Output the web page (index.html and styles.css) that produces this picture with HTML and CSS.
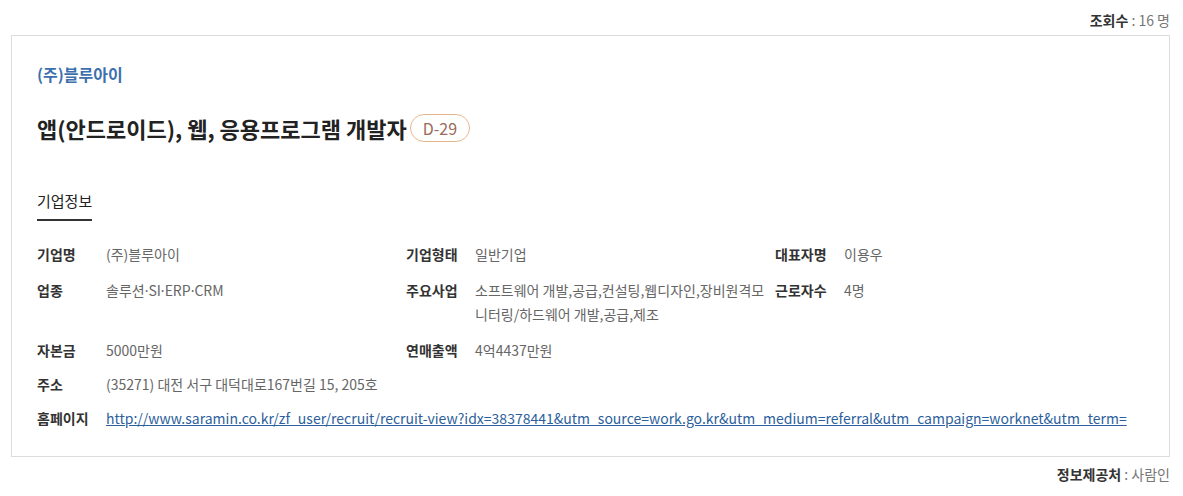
FILE: index.html
```html
<!DOCTYPE html>
<html>
<head>
  <title>채용정보 - 기업정보</title>
  <meta charset="UTF-8">
  <link rel="stylesheet" href="styles.css">
</head>
<body>
  <div class="wrap">
    <p class="meta"><strong>조회수</strong> : 16 명</p>

    <div class="card">
      <p class="company">(주)블루아이</p>
      <h2 class="title">앱(안드로이드), 웹, 응용프로그램 개발자 <span class="dday">D-29</span></h2>

      <div class="tab">
        <span class="tab-on">기업정보</span>
      </div>

      <div class="info">
        <dl class="item"><dt>기업명</dt><dd>(주)블루아이</dd></dl>
        <dl class="item"><dt>기업형태</dt><dd>일반기업</dd></dl>
        <dl class="item"><dt>대표자명</dt><dd>이용우</dd></dl>

        <dl class="item"><dt>업종</dt><dd>솔루션<span class="dot">·</span>SI<span class="dot">·</span>ERP<span class="dot">·</span>CRM</dd></dl>
        <dl class="item"><dt>주요사업</dt><dd>소프트웨어 개발,공급,컨설팅,웹디자인,장비원격모니터링/하드웨어 개발,공급,제조</dd></dl>
        <dl class="item"><dt>근로자수</dt><dd>4명</dd></dl>

        <dl class="item"><dt>자본금</dt><dd>5000만원</dd></dl>
        <dl class="item wide2"><dt>연매출액</dt><dd>4억4437만원</dd></dl>
      </div>

      <div class="info-full">
        <dl class="item"><dt>주소</dt><dd>(35271) 대전 서구 대덕대로167번길 15, 205호</dd></dl>
        <dl class="item"><dt>홈페이지</dt><dd><a href="http://www.saramin.co.kr/zf_user/recruit/recruit-view?idx=38378441&amp;utm_source=work.go.kr&amp;utm_medium=referral&amp;utm_campaign=worknet&amp;utm_term=">http://www.saramin.co.kr/zf_user/recruit/recruit-view?idx=38378441&amp;utm_source=work.go.kr&amp;utm_medium=referral&amp;utm_campaign=worknet&amp;utm_term=</a></dd></dl>
      </div>
    </div>

    <p class="meta source"><strong>정보제공처</strong> : 사람인</p>
  </div>
</body>
</html>
```

FILE: styles.css
```css
body {
  margin: 0;
  font-family: "Noto Sans CJK KR", "Noto Sans", sans-serif;
  color: #333;
  background: #fff;
}
.wrap {
  margin: 0 13px 0 11px;
  padding-top: 10px;
}
.meta {
  margin: 0;
  text-align: right;
  font-size: 14px;
  line-height: 20px;
  color: #777;
}
.meta strong {
  color: #333;
  font-weight: bold;
}
.card {
  margin-top: 5px;
  border: 1px solid #dcdcdc;
  padding: 27px 25px 26px 25px;
}
.company {
  margin: 0;
  font-size: 16px;
  line-height: 22px;
  font-weight: bold;
  color: #3c6fad;
}
.title {
  margin: 28px 0 0 0;
  font-size: 22px;
  line-height: 30px;
  font-weight: bold;
  color: #222;
  display: flex;
  align-items: center;
  gap: 3px;
}
.dday {
  display: inline-block;
  height: 26px;
  line-height: 26px;
  padding: 0 12px;
  border: 1px solid #e6b78f;
  border-radius: 14px;
  font-size: 16px;
  font-weight: normal;
  color: #9a6a5a;
}
.tab {
  margin-top: 47px;
  line-height: 20px;
}
.tab-on {
  display: inline-block;
  font-size: 15px;
  line-height: 20px;
  padding-bottom: 8px;
  border-bottom: 2px solid #333;
  color: #222;
}
.info {
  display: grid;
  grid-template-columns: repeat(3, 1fr);
  margin-top: 21px;
  row-gap: 12px;
}
.info-full {
  display: grid;
  margin-top: 10px;
  row-gap: 10px;
}
.item {
  display: flex;
  margin: 0;
  font-size: 14px;
  line-height: 24px;
}
.item dt {
  width: 69px;
  flex: none;
  font-weight: bold;
  color: #333;
}
.item dd {
  margin: 0;
  flex: 1;
  color: #666;
}
.dot {
  font-family: "Noto Sans", sans-serif;
}
.wide2 {
  grid-column: span 2;
}
.item a {
  color: #2d5f9c;
  text-decoration: underline;
  word-break: break-all;
}
.source {
  margin-top: 7px;
}
```
